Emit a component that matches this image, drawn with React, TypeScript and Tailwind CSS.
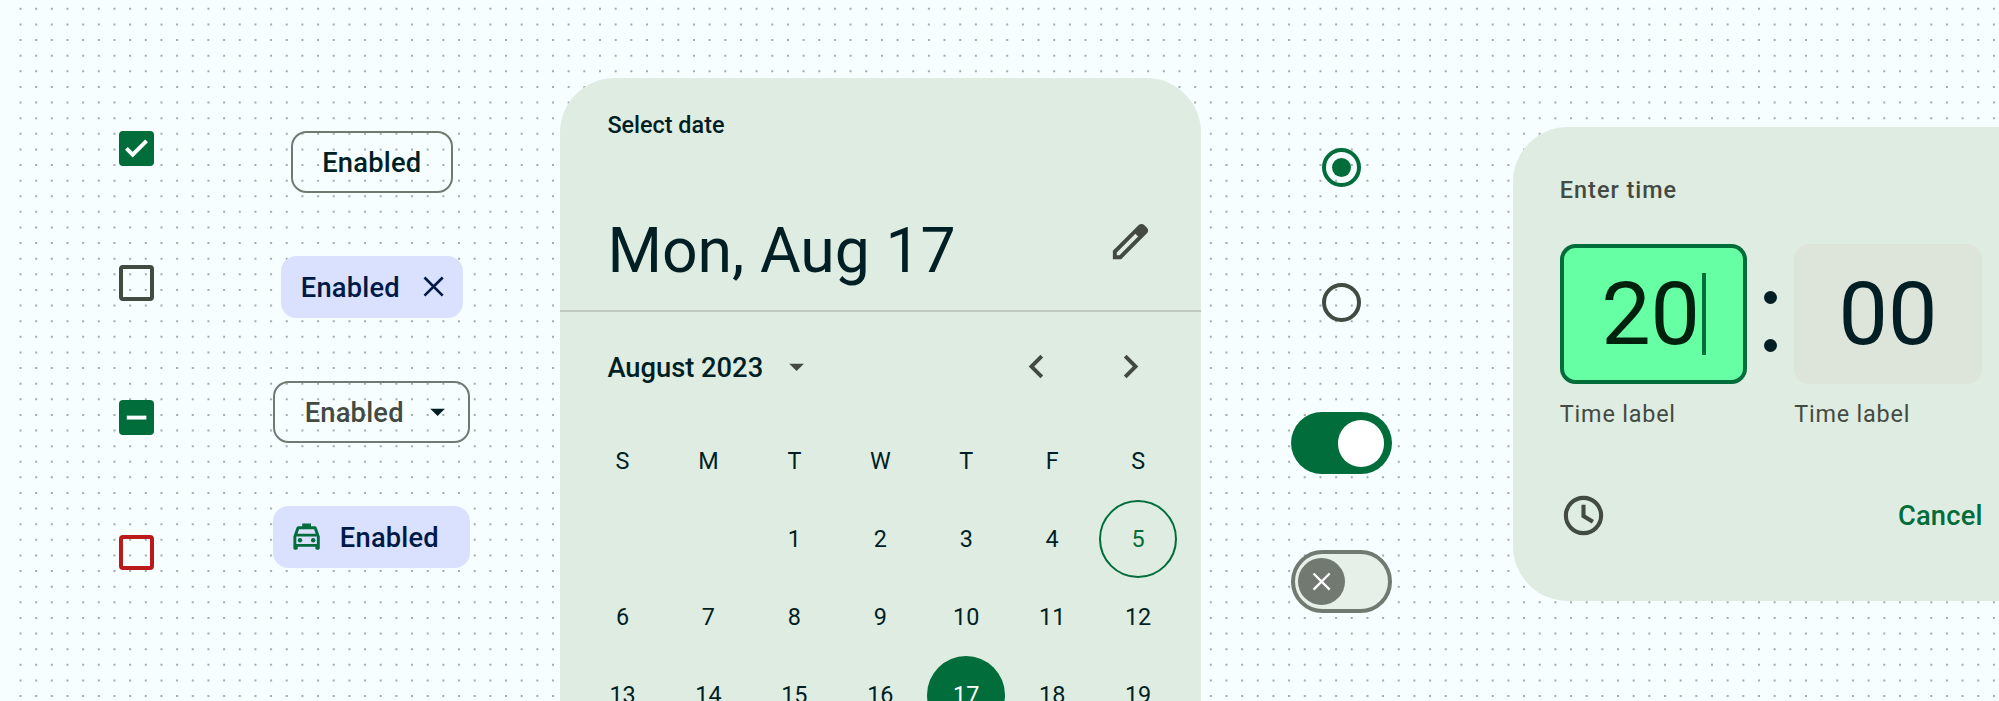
import React from "react";

const weekdays = ["S", "M", "T", "W", "T", "F", "S"];
const days = ["", "", "1", "2", "3", "4", "5", "6", "7", "8", "9", "10", "11", "12", "13", "14", "15", "16", "17", "18", "19"];
const dotRows = Array.from({ length: 45 }, (_, i) => 8.85 + i * 15.617);

function Dots() {
  return (
    <svg className="absolute inset-0 h-[701px] w-[1999px]" viewBox="0 0 1999 701">
      {dotRows.map((y) => (
        <line key={y} x1="19.5" x2="1999" y1={y} y2={y} stroke="#a3adab" strokeWidth="2" strokeDasharray="2 13.662" />
      ))}
    </svg>
  );
}

function Icon({ d, className }: { d: string; className: string }) {
  return (
    <svg viewBox="0 0 24 24" fill="currentColor" fillRule="evenodd" className={className}>
      <path d={d} />
    </svg>
  );
}

function Close({ className }: { className: string }) {
  return (
    <svg viewBox="0 0 24 24" fill="none" stroke="currentColor" strokeWidth="1.8" className={className}>
      <path d="M5.8 5.8l12.4 12.4M18.2 5.8 5.8 18.2" />
    </svg>
  );
}

function Checkbox({ d, className }: { d?: string; className: string }) {
  return (
    <div className={`flex size-[35.2px] items-center justify-center rounded-[4px] text-white ${className}`}>
      {d && (
        <svg viewBox="0 0 18 18" className="size-[35.2px] shrink-0" fill="none" stroke="currentColor" strokeWidth="2">
          <path d={d} />
        </svg>
      )}
    </div>
  );
}

const chip = "flex h-[62.5px] items-center rounded-[15.6px] text-[27.3px] font-medium tracking-[0.2px]";

function TimeField({ children, className }: { children: React.ReactNode; className: string }) {
  return (
    <div className="flex w-[187.5px] flex-col">
      <div className={`relative flex h-[140.6px] items-center justify-center rounded-[15.6px] text-[88px] leading-none ${className}`}>
        {children}
      </div>
      <span className="mt-[14.4px] text-[23.4px] leading-[31px] tracking-[0.8px] text-[#434a42]">Time label</span>
    </div>
  );
}

export default function App() {
  return (
    <div className="relative h-[701px] w-[1999px] overflow-hidden bg-[#f6feff] font-['Roboto',sans-serif]">
      <Dots />
      <div className="relative flex items-start *:shrink-0">
        <div className="ml-[119px] mt-[130.7px] flex flex-col gap-[99.6px]">
          <Checkbox className="bg-[#006d3b]" d="M3.8 8.9 7 12.1 14.1 5" />
          <Checkbox className="border-4 border-[#434a42]" />
          <Checkbox className="bg-[#006d3b]" d="M4 9h10" />
          <Checkbox className="border-4 border-[#ba1a1a]" />
        </div>

        <div className="ml-[119px] mt-[130.7px] flex w-[197.2px] flex-col items-center gap-[62.5px]">
          <div className={`${chip} w-[162px] justify-center border-2 border-[#727971] text-[#001f25]`}>
            <span className="pt-[3.5px]">Enabled</span>
          </div>
          <div className={`${chip} w-[182px] justify-between bg-[#d9e1ff] pl-[20px] pr-[11.5px] text-[#001947]`}>
            <span className="pt-[3.5px]">Enabled</span>
            <Close className="size-[35.2px]" />
          </div>
          <div className={`${chip} w-[197.2px] justify-between border-2 border-[#727971] pl-[29.5px] pr-[13.5px] text-[#434a42]`}>
            <span className="pt-[3.5px]">Enabled</span>
            <Icon className="size-[35.2px] text-[#001f25]" d="m7 10 5 5 5-5z" />
          </div>
          <div className={`${chip} w-[197.2px] gap-[15.9px] bg-[#d9e1ff] pl-[15.6px] text-[#001947]`}>
            <svg viewBox="0 0 24 24" className="size-[35.2px] text-[#006d3b]" fill="currentColor">
              <path d="M18.92 6.01C18.72 5.42 18.16 5 17.5 5H15V3H9v2H6.5c-.66 0-1.21.42-1.42 1.01L3 12v8c0 .55.45 1 1 1h1c.55 0 1-.45 1-1v-1h12v1c0 .55.45 1 1 1h1c.55 0 1-.45 1-1v-8zM6.85 7h10.29l1.04 3H5.81zM19 17H5v-5h14z" />
              <circle cx="7.5" cy="14.5" r="1.5" />
              <circle cx="16.5" cy="14.5" r="1.5" />
            </svg>
            <span className="pt-[3.5px]">Enabled</span>
          </div>
        </div>

        <section className="ml-[90px] mt-[78px] h-[623px] w-[640.3px] overflow-hidden rounded-t-[54.7px] bg-[#dfece1] text-[#001f25]">
          <div className="flex h-[234px] flex-col border-b-2 border-[#c0c9c0] pl-[47px] pr-[46.8px] pt-[32px]">
            <span className="text-[23.4px] font-medium leading-[31px]">Select date</span>
            <div className="mt-[69px] flex items-center justify-between">
              <span className="pt-[2px] text-[62.5px] leading-[78px]">Mon, Aug 17</span>
              <Icon
                className="mb-[16.5px] size-[47px] text-[#434a42]"
                d="M3 21v-4.25L16.2 3.57Q16.8 3 17.6 3t1.4.57l1.4 1.4q.6.6.6 1.42t-.6 1.4L7.25 21zM5 19h1.4L15.9 9.5 14.5 8.1 5 17.6z"
              />
            </div>
          </div>
          <div className="flex h-[109.5px] items-center pl-[47px] pr-[47px]">
            <span className="pt-[3.5px] text-[27.3px] font-medium">August 2023</span>
            <Icon className="ml-[16px] size-[35.2px] text-[#434a42]" d="m7 10 5 5 5-5z" />
            <Icon className="ml-auto size-[47px] text-[#434a42]" d="M15.41 7.41 14 6l-6 6 6 6 1.41-1.41L10.83 12z" />
            <Icon className="ml-[46.7px] size-[47px] text-[#434a42]" d="M10 6 8.59 7.41 13.17 12l-4.58 4.59L10 18l6-6z" />
          </div>
          <div className="ml-[19.2px] grid w-[601.5px] grid-cols-7 text-[23.4px]">
            {weekdays.map((d, i) => (
              <div key={i} className="flex h-[78.1px] items-center justify-center pt-[2px]">{d}</div>
            ))}
            {days.map((d, i) => (
              <div key={i} className="flex h-[78.1px] items-center justify-center">
                <span
                  className={
                    d === "17"
                      ? "flex size-[78.1px] items-center justify-center rounded-full bg-[#006d3b] pt-[2px] text-white"
                      : d === "5"
                        ? "flex size-[78.1px] items-center justify-center rounded-full border-2 border-[#006d3b] pt-[2px] text-[#006d3b]"
                        : "pt-[2px]"
                  }
                >
                  {d}
                </span>
              </div>
            ))}
          </div>
        </section>

        <div className="ml-[90px] mt-[148px] flex w-[101.6px] flex-col items-center">
          <div className="flex size-[39.2px] items-center justify-center rounded-full border-4 border-[#006d3b]">
            <div className="size-[19.6px] rounded-full bg-[#006d3b]" />
          </div>
          <div className="mt-[95.7px] size-[39.2px] rounded-full border-4 border-[#434a42]" />
          <div className="mt-[89.9px] flex h-[62.5px] w-[101.6px] items-center justify-end rounded-full bg-[#006d3b] pr-[7.8px]">
            <div className="size-[46.9px] rounded-full bg-white" />
          </div>
          <div className="mt-[76px] flex h-[62.5px] w-[101.6px] items-center rounded-full border-4 border-[#727971] bg-[#e7f0e8] pl-[3.8px]">
            <div className="flex size-[46.9px] items-center justify-center rounded-full bg-[#727971]">
              <Close className="size-[31.2px] text-white" />
            </div>
          </div>
        </div>

        <section className="ml-[120.6px] mt-[127px] flex h-[474px] w-[560px] flex-col rounded-[54.7px] bg-[#dfece1] pl-[47px] pt-[47.6px]">
          <span className="text-[23.4px] font-medium leading-[31px] tracking-[1px] text-[#434a42]">Enter time</span>
          <div className="mt-[38.2px] flex">
            <TimeField className="border-4 border-[#006d3b] bg-[#66ffa3] pr-[6px] text-[#00210e]">
              20
              <span className="absolute left-[138.3px] top-[25.3px] h-[82px] w-[4px] bg-[#006d3b]" />
            </TimeField>
            <div className="flex h-[140.6px] w-[46.8px] flex-col items-center gap-[35px] pt-[47.5px]">
              <span className="size-[13px] rounded-full bg-[#001f25]" />
              <span className="size-[13px] rounded-full bg-[#001f25]" />
            </div>
            <TimeField className="bg-[#dde4da] text-[#001f25]">00</TimeField>
          </div>
          <div className="mt-[62.4px] flex w-[422.8px] items-center justify-between">
            <svg viewBox="0 0 24 24" className="size-[47px] text-[#434a42]" fill="none" stroke="currentColor">
              <circle cx="12" cy="12" r="9" strokeWidth="2.1" />
              <path d="M12 6.5v5.8l4.8 2.9" strokeWidth="2.1" />
            </svg>
            <span className="pt-[2px] text-[27.3px] font-medium tracking-[0.2px] text-[#006d3b]">Cancel</span>
          </div>
        </section>
      </div>
    </div>
  );
}
